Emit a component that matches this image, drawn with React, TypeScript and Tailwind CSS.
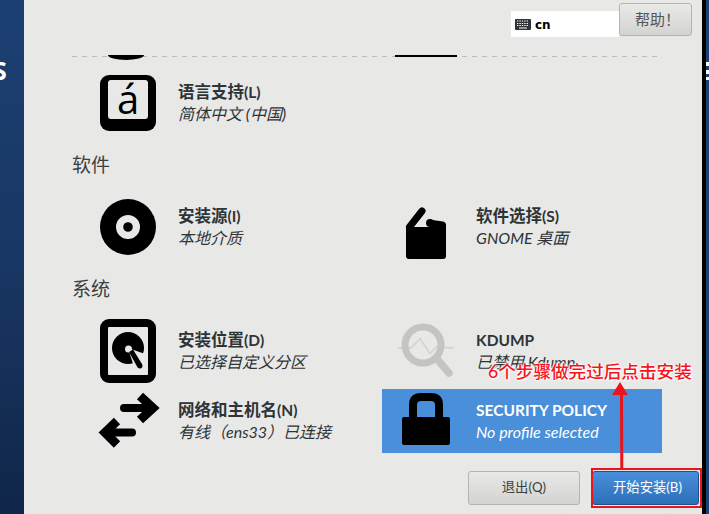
const font = "font-['Lato','Noto_Sans_CJK_SC',sans-serif]";

function LangIcon() {
  return (
    <div className="relative flex h-14 w-14 items-center justify-center rounded-[9px] bg-black">
      <div className="mb-[8px] flex h-[39px] w-10 items-center justify-center rounded-[3px] bg-[#e8e8e7] font-['Open_Sans',sans-serif] text-[40px] leading-none font-medium text-black">
        á
      </div>
    </div>
  );
}

function DiscIcon() {
  return (
    <svg width="64" height="64" viewBox="0 0 64 64">
      <circle cx="32" cy="32" r="28" fill="#000" />
      <circle cx="32" cy="32" r="8.4" fill="none" stroke="#e8e8e7" strokeWidth="7.2" />
    </svg>
  );
}

function BoxIcon() {
  return (
    <svg width="64" height="64" viewBox="0 0 64 64">
      <path d="M28 16 L15.5 32" stroke="#000" strokeWidth="7" strokeLinecap="round" fill="none" />
      <circle cx="36" cy="28" r="4" fill="#000" />
      <path d="M12 32 H35 V24.5 L49 26.5 Q52 27 52 30 V61 Q52 64 49 64 H15 Q12 64 12 61 Z" fill="#000" />
    </svg>
  );
}

function DiskIcon() {
  return (
    <svg width="64" height="64" viewBox="0 0 64 64">
      <rect x="8" y="4" width="48" height="56" rx="5" fill="#e8e8e7" stroke="#000" strokeWidth="8" />
      <circle cx="32" cy="29" r="16" fill="#000" />
      <path d="M32 29 L38 48 L52 48 L52 36 Z" fill="#e8e8e7" />
      <circle cx="32.5" cy="30" r="3.5" fill="#e8e8e7" />
      <path d="M33 33 L37 30.5 L46 45 Q47.5 48.5 44.5 49.5 Q42 50 41 47.5 Z" fill="#000" />
    </svg>
  );
}

function NetIcon() {
  return (
    <svg width="64" height="64" viewBox="0 0 64 64" className="overflow-visible">
      <path d="M28 19 H56" stroke="#000" strokeWidth="8" strokeLinecap="round" fill="none" />
      <path d="M44 7 L57 19 L44 31" stroke="#000" strokeWidth="9" fill="none" />
      <path d="M36 43.5 H10" stroke="#000" strokeWidth="8" strokeLinecap="round" fill="none" />
      <path d="M21 32 L9 43.5 L21 55.5" stroke="#000" strokeWidth="9" fill="none" />
    </svg>
  );
}

function KdumpIcon() {
  return (
    <svg width="64" height="64" viewBox="0 0 64 64">
      <path d="M4 29 H17 L26 19.5 L36 34.5 L42.5 28 L60 29" stroke="#d6d6d4" strokeWidth="2" fill="none" />
      <circle cx="29" cy="26" r="18" fill="none" stroke="#c4c4c2" strokeWidth="7" />
      <path d="M43 40 L55 54" stroke="#c4c4c2" strokeWidth="7.5" strokeLinecap="round" />
    </svg>
  );
}

function LockIcon() {
  return (
    <svg width="64" height="64" viewBox="0 0 64 64">
      <path d="M19 32 V16 Q19 8 27 8 H37 Q45 8 45 16 V32" fill="none" stroke="#000" strokeWidth="8" />
      <rect x="8" y="28" width="48" height="28" rx="2" fill="#000" />
    </svg>
  );
}

function Spoke({
  icon,
  title,
  latin,
  sub,
  selected,
}: {
  icon: React.ReactNode;
  title?: string;
  latin: string;
  sub: string;
  selected?: boolean;
}) {
  return (
    <div className={`flex h-16 items-center gap-[18px] pl-3 ${selected ? "bg-[#4a8fd9] text-white" : "text-[#2e3436]"}`}>
      <div className="flex h-16 w-16 shrink-0 items-center justify-center">{icon}</div>
      <div className="mb-[2px] flex flex-col text-[16px] leading-[21px]">
        <span className="font-bold whitespace-nowrap">
          {title && <span className="text-[16.5px]">{title}</span>}
          <span className="text-[15.5px]">{latin}</span>
        </span>
        <span className="italic whitespace-nowrap">{sub}</span>
      </div>
    </div>
  );
}

function Section({ children }: { children: React.ReactNode }) {
  return <div className="ml-[-12px] h-6 text-[19px] leading-6 text-[#3a3f41]">{children}</div>;
}

export default function App() {
  return (
    <div className={`flex h-[514px] w-[709px] overflow-hidden bg-black ${font}`}>
      <aside className="h-full w-6 shrink-0 overflow-hidden bg-gradient-to-b from-[#1c3f72] via-[#193764] to-[#10264a] pt-[53px]">
        <span className="ml-[-7px] block font-['Open_Sans',sans-serif] text-[25px] leading-[34px] font-bold text-white">S</span>
      </aside>

      <main className="relative h-full w-[678px] shrink-0 bg-[#e8e8e7]">
        <header className="flex h-14 justify-end pr-[10px] pt-[3px]">
          <div className="mt-2 flex h-[26px] w-[108px] items-center gap-1 bg-white pl-1 pt-px">
            <svg width="16" height="11" viewBox="0 0 16 11">
              <rect width="16" height="11" rx="1" fill="#2e3436" />
              <path d="M2 2 H14 M2 4.5 H14 M2 6.5 H14" stroke="#fff" strokeWidth="1" strokeDasharray="1.4 1" />
              <path d="M4 9 H12" stroke="#fff" strokeWidth="1" />
            </svg>
            <span className="font-['DejaVu_Sans',sans-serif] text-[12px] font-bold text-black">cn</span>
          </div>
          <button className="h-[33px] w-[73px] rounded-[3px] border border-[#b4b4b2] bg-gradient-to-b from-[#e9e9e8] to-[#d3d3d1] pl-1 text-[15px] text-[#555]">
            帮助！
          </button>
        </header>

        <div className="ml-12 h-px w-[585px] bg-[repeating-linear-gradient(90deg,#bdbdbb_0,#bdbdbb_5px,transparent_5px,transparent_10px)]" />

        <div className="absolute top-[55px] left-[84px] h-[5px] w-9 rounded-b-[18px_5px] bg-black" />
        <div className="absolute top-[55px] left-[371px] h-[2px] w-[62px] bg-black" />

        <div className="ml-[60px] pt-[14px]">
          <div className="w-[298px]">
            <Spoke icon={<LangIcon />} title="语言支持" latin="(L)" sub="简体中文 (中国)" />
          </div>
          <div className="mt-[18px]">
            <Section>软件</Section>
          </div>
          <div className="mt-[18px] grid w-[578px] grid-cols-[298px_280px]">
            <Spoke icon={<DiscIcon />} title="安装源" latin="(I)" sub="本地介质" />
            <Spoke icon={<BoxIcon />} title="软件选择" latin="(S)" sub="GNOME 桌面" />
          </div>
          <div className="mt-[18px]">
            <Section>系统</Section>
          </div>
          <div className="mt-[18px] grid w-[578px] grid-cols-[298px_280px] gap-y-[6px]">
            <Spoke icon={<DiskIcon />} title="安装位置" latin="(D)" sub="已选择自定义分区" />
            <Spoke icon={<KdumpIcon />} latin="KDUMP" sub="已禁用 Kdump" />
            <Spoke icon={<NetIcon />} title="网络和主机名" latin="(N)" sub="有线（ens33）已连接" />
            <Spoke icon={<LockIcon />} latin="SECURITY POLICY" sub="No profile selected" selected />
          </div>
        </div>

        <div className="mt-[18px] flex justify-end gap-3 pr-[3px]">
          <button className="h-[34px] w-[112px] rounded-[3px] border border-[#b4b4b2] bg-gradient-to-b from-[#e9e9e8] to-[#d3d3d1] text-[13.3px] text-[#3a3f41]">
            退出(Q)
          </button>
          <button className="h-[34px] w-[107px] rounded-[3px] border border-[#1c5187] bg-gradient-to-b from-[#4a8fdc] to-[#2b6fb8] pl-1 text-[13.3px] text-white">
            开始安装(B)
          </button>
        </div>
        <p className="mt-[8px] pr-[3px] text-right text-[12.5px] leading-4 whitespace-nowrap text-[#3a3f41]">
          在点击“开始安装”按钮前我们并不会操作您的磁盘。
        </p>

        <div className="absolute top-[360px] left-[464px] text-[17.6px] leading-6 font-medium whitespace-nowrap text-[#f5141e] [text-shadow:0_0_2px_#fff,0_0_2px_#fff,0_0_3px_#fff,1px_1px_2px_#fff]">
          6个步骤做完过后点击安装
        </div>
        <div className="absolute top-[468px] left-[567px] h-10 w-[111px] border-2 border-[#e8141e]" />
        <svg className="absolute top-[380px] left-[586px]" width="20" height="90" viewBox="0 0 20 90">
          <path d="M11.5 12 L11.8 89" stroke="#e8141e" strokeWidth="3" />
          <path d="M10 2 L18 15 L2 15 Z" fill="#e8141e" />
        </svg>
      </main>

      <div className="ml-1 flex h-full w-[3px] shrink-0 flex-col bg-[#1c3f72] pt-[62px]">
        <div className="h-1 bg-white" />
        <div className="mt-1 h-1 bg-white" />
        <div className="mt-[3px] h-[3px] bg-white" />
      </div>
    </div>
  );
}
